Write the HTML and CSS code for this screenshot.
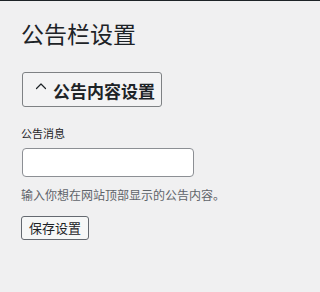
FILE: index.html
```html
<!DOCTYPE html>
<html lang="zh-CN">
<head>
<meta charset="utf-8">
<title>公告栏设置</title>
<link rel="stylesheet" href="styles.css">
</head>
<body>
<div class="wrap">
  <h1 class="page-title">公告栏设置</h1>
  <button class="section-toggle" type="button">
    <svg class="caret" width="12" height="8" viewBox="0 0 12 8"><polyline points="1.5,6.5 6,2 10.5,6.5" fill="none" stroke="#1d2327" stroke-width="1.2" stroke-linecap="round" stroke-linejoin="round"/></svg>
    <span class="section-title">公告内容设置</span>
  </button>
  <label class="field-label" for="notice">公告消息</label>
  <input class="text-input" id="notice" type="text">
  <p class="description">输入你想在网站顶部显示的公告内容。</p>
  <button class="save-button" type="button">保存设置</button>
</div>
</body>
</html>
```

FILE: styles.css
```css
html, body {
  margin: 0;
  padding: 0;
}
body {
  background: #f0f0f1;
  border-top: 1px solid #1d2327;
  font-family: "Noto Sans CJK SC", "Noto Sans", sans-serif;
  color: #1d2327;
  height: 291px;
  overflow: hidden;
}
.wrap {
  display: flex;
  flex-direction: column;
  align-items: flex-start;
  padding: 18px 0 0 21px;
}
.page-title {
  margin: 0;
  font-size: 23px;
  line-height: 29px;
  font-weight: 400;
  color: #1d2327;
}
.section-toggle {
  margin: 24px 0 0 1px;
  box-sizing: border-box;
  width: 140px;
  height: 35px;
  display: flex;
  align-items: flex-start;
  padding: 8px 0 0 12px;
  border: 1px solid #7e8184;
  border-radius: 3px;
  background: #f3f3f4;
  font-family: inherit;
  color: #1d2327;
  cursor: pointer;
}
.caret {
  display: block;
  margin-top: 1px;
  flex: none;
}
.section-title {
  margin-left: 6px;
  font-size: 17px;
  line-height: 20px;
  font-weight: 700;
}
.field-label {
  margin-top: 19px;
  font-size: 11px;
  line-height: 15px;
  font-weight: 400;
  color: #1d2327;
}
.text-input {
  margin: 7px 0 0 1px;
  box-sizing: border-box;
  width: 172px;
  height: 29px;
  border: 1px solid #8c8f94;
  border-radius: 4px;
  background: #fff;
  padding: 0 8px;
  font-family: inherit;
}
.description {
  margin: 10px 0 0;
  font-size: 12px;
  line-height: 16px;
  color: #5f646a;
}
.save-button {
  margin-top: 13px;
  box-sizing: border-box;
  width: 68px;
  height: 24px;
  padding: 0;
  border: 1px solid #646970;
  border-radius: 3px;
  background: #f6f7f7;
  font-family: inherit;
  font-size: 13px;
  line-height: 20px;
  color: #1d2327;
  cursor: pointer;
}
```
